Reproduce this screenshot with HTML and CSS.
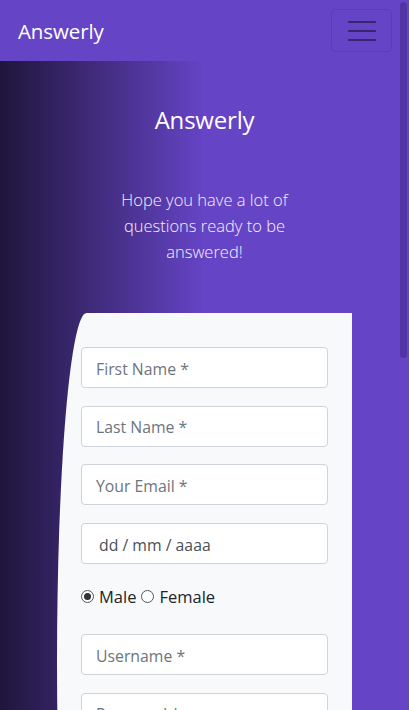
FILE: index.html
```html
<!DOCTYPE html>
<html lang="es">
<head>
<meta charset="utf-8">
<meta name="viewport" content="width=device-width, initial-scale=1">
<title>Answerly</title>
<link rel="stylesheet" href="styles.css">
</head>
<body>
<nav class="navbar">
  <a class="brand" href="#">Answerly</a>
  <button class="toggler" type="button" aria-label="Menu">
    <svg width="28" height="22" viewBox="0 0 28 22" aria-hidden="true">
      <path d="M1 2h26M1 11h26M1 20h26" stroke="rgba(0,0,0,0.45)" stroke-width="2.2" stroke-linecap="round" fill="none"/>
    </svg>
  </button>
</nav>
<section class="register">
  <div class="register-left">
    <h3 class="title">Answerly</h3>
    <p class="lead-text">Hope you have a lot of questions ready to be answered!</p>
  </div>
  <div class="register-right">
    <form class="form">
      <input class="field" type="text" placeholder="First Name *">
      <input class="field" type="text" placeholder="Last Name *">
      <input class="field" type="email" placeholder="Your Email *">
      <div class="field date">dd / mm / aaaa</div>
      <div class="radios">
        <label class="radio"><span class="dot checked"></span>Male</label>
        <label class="radio"><span class="dot"></span>Female</label>
      </div>
      <input class="field" type="text" placeholder="Username *">
      <input class="field" type="password" placeholder="Password *">
      <input class="field" type="password" placeholder="Confirm Password *">
      <input class="field" type="text" placeholder="Your Phone *">
      <input class="field" type="text" placeholder="Enter Your Answer *">
      <button class="submit" type="button">Register</button>
    </form>
  </div>
</section>
<div class="scroll-thumb"></div>
</body>
</html>
```

FILE: styles.css
```css
html {
  scrollbar-width: none;
}
html::-webkit-scrollbar {
  display: none;
}
* {
  box-sizing: border-box;
}
body {
  margin: 0;
  font-family: "Open Sans", "Noto Sans", sans-serif;
  background: #6644c6;
  color: #212529;
}
.navbar {
  height: 61px;
  background: #6644c6;
  display: flex;
  align-items: center;
  justify-content: space-between;
  padding: 0 18px 0 18px;
}
.brand {
  color: #fff;
  text-decoration: none;
  font-size: 20.5px;
  letter-spacing: -0.1px;
}
.toggler {
  width: 61px;
  height: 43px;
  background: transparent;
  border: 1px solid rgba(0, 0, 0, 0.1);
  border-radius: 5px;
  display: flex;
  align-items: center;
  justify-content: center;
  padding: 0;
  margin-right: -1px;
}
.toggler svg {
  display: block;
}
.register {
  background: linear-gradient(to right, #1f163b 0%, #6644c6 50%, #6644c6 100%);
  padding-bottom: 60px;
}
.register-left {
  text-align: center;
  color: #fff;
  padding-top: 44px;
}
.title {
  margin: 0;
  font-weight: 400;
  font-size: 24px;
  line-height: 30px;
  letter-spacing: -0.2px;
}
.lead-text {
  margin: 52px auto 0;
  max-width: 210px;
  font-size: 16.5px;
  line-height: 26px;
  font-weight: 300;
  color: #f4f0ff;
}
.register-right {
  margin: 48px 57px 0 57px;
  background: #f8f9fa;
  border-top-left-radius: 10% 50%;
  border-bottom-left-radius: 10% 50%;
  padding: 34px 24px 40px 24px;
  height: 700px;
}
.form {
  display: flex;
  flex-direction: column;
}
.field {
  display: block;
  width: 100%;
  height: 41px;
  margin: 0 0 17.7px 0;
  padding: 2px 14px 0 14px;
  border: 1px solid #ced4da;
  border-radius: 4px;
  background: #fff;
  font-family: inherit;
  font-size: 15.8px;
  color: #495057;
}
.field::placeholder {
  color: #6c757d;
}
.date {
  display: flex;
  align-items: center;
  padding-left: 17px;
  color: #495057;
}
.radios {
  display: flex;
  align-items: center;
  gap: 5px;
  height: 29px;
  margin: 0 0 23.3px 0;
}
.radio {
  display: flex;
  align-items: center;
  gap: 5px;
  font-size: 16.5px;
  color: #212529;
}
.dot {
  width: 13px;
  height: 13px;
  border: 1px solid #555;
  border-radius: 50%;
  background: #fff;
  display: inline-flex;
  align-items: center;
  justify-content: center;
}
.dot.checked::after {
  content: "";
  width: 7px;
  height: 7px;
  border-radius: 50%;
  background: #333;
}
.submit {
  margin-top: 10px;
  height: 40px;
  border: none;
  border-radius: 20px;
  background: #6644c6;
  color: #fff;
  font-family: inherit;
  font-size: 16px;
}
.scroll-thumb {
  position: fixed;
  top: 2px;
  right: 2px;
  width: 7px;
  height: 356px;
  border-radius: 4px;
  background: #5135a6;
}
```
